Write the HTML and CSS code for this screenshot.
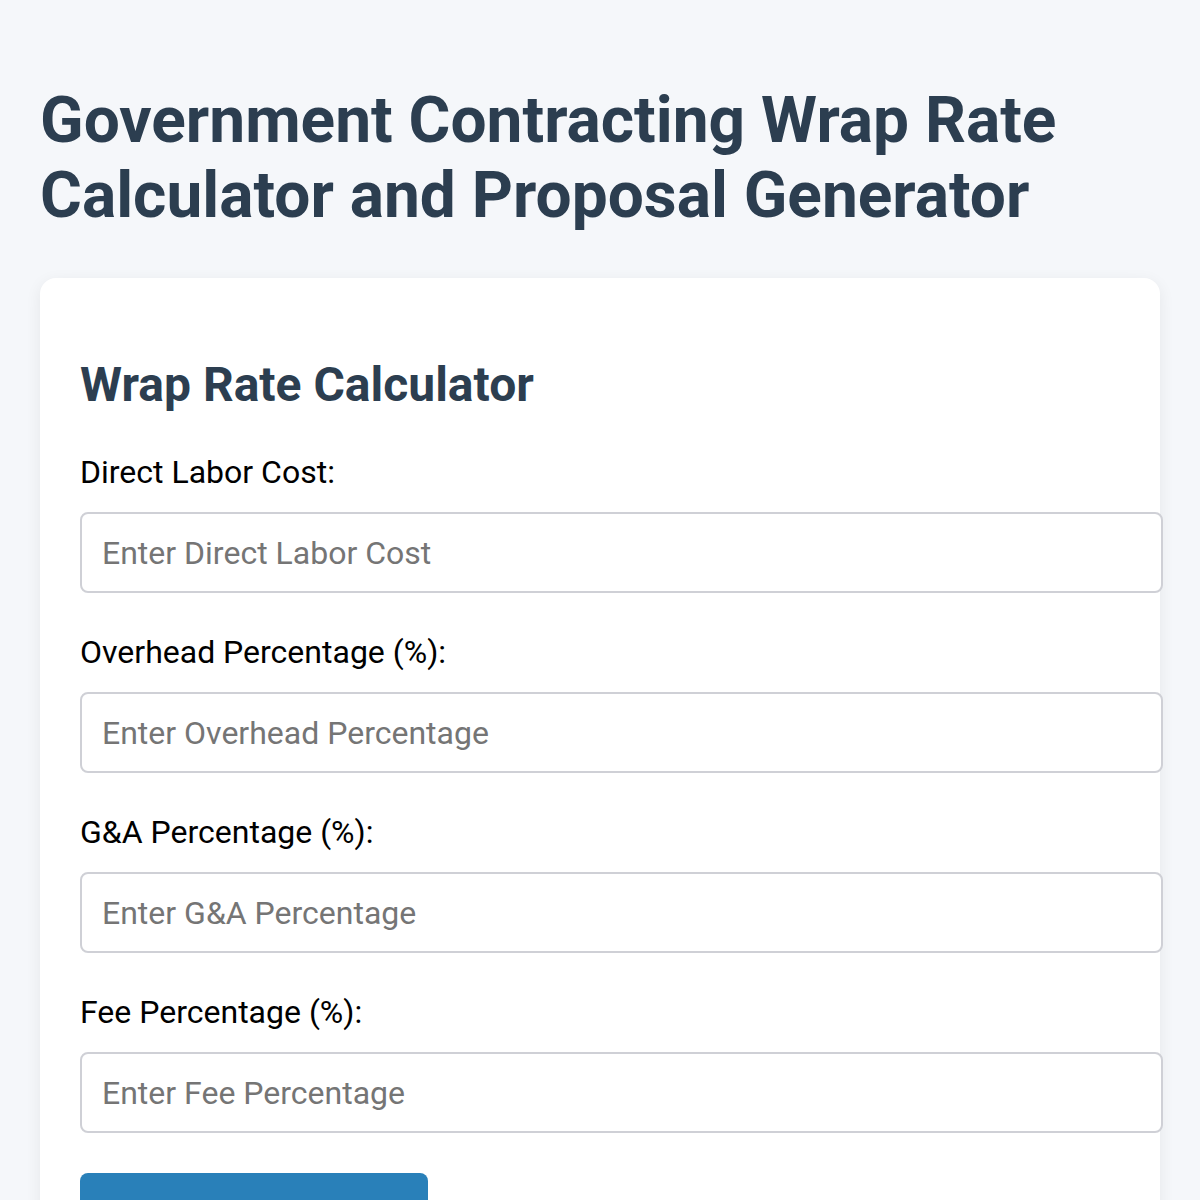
FILE: index.html
```html
<!DOCTYPE html>
<html lang="en">
<head>
<meta charset="utf-8">
<title>Government Contracting Wrap Rate Calculator and Proposal Generator</title>
<link rel="stylesheet" href="styles.css">
</head>
<body>
<h1 class="page-title">Government Contracting Wrap Rate Calculator and Proposal Generator</h1>
<section class="card">
  <h2 class="card-title">Wrap Rate Calculator</h2>
  <label class="field-label" for="labor">Direct Labor Cost:</label>
  <input class="field-input" id="labor" type="number" placeholder="Enter Direct Labor Cost">
  <label class="field-label" for="overhead">Overhead Percentage (%):</label>
  <input class="field-input" id="overhead" type="number" placeholder="Enter Overhead Percentage">
  <label class="field-label" for="ga">G&amp;A Percentage (%):</label>
  <input class="field-input" id="ga" type="number" placeholder="Enter G&amp;A Percentage">
  <label class="field-label" for="fee">Fee Percentage (%):</label>
  <input class="field-input" id="fee" type="number" placeholder="Enter Fee Percentage">
  <button class="primary-btn" type="button">Calculate Wrap Rate</button>
</section>
</body>
</html>
```
FILE: styles.css
```css
html, body {
  margin: 0;
  background: #f5f7fa;
}
body {
  padding: 40px;
  font-family: Roboto, "Noto Sans", sans-serif;
  color: #000;
}
.page-title {
  font-size: 64px;
  font-weight: 700;
  line-height: normal;
  color: #2c3e50;
  margin: 43px 0 45px 0;
}
.card {
  background: #fff;
  border-radius: 16px;
  box-shadow: 0 4px 16px rgba(0, 0, 0, 0.07);
  padding: 38px 40px 40px 40px;
}
.card-title {
  font-size: 48px;
  font-weight: 700;
  line-height: normal;
  color: #2c3e50;
  margin: 40px 0 40px 0;
}
.field-label {
  display: block;
  font-size: 32px;
  line-height: normal;
  margin-bottom: 21px;
}
.field-input {
  display: block;
  box-sizing: border-box;
  width: calc(100% + 43px);
  height: 81px;
  padding: 0 20px;
  margin: 0 0 40px 0;
  border: 2px solid #cfd0d6;
  border-radius: 8px;
  font-family: Roboto, "Noto Sans", sans-serif;
  font-size: 32px;
  background: #fff;
  outline: none;
}
.field-input::placeholder {
  color: #757575;
}
.primary-btn {
  display: block;
  width: 348px;
  padding: 20px 40px;
  border: none;
  border-radius: 8px;
  background: #2980b9;
  color: #fff;
  font-family: Roboto, "Noto Sans", sans-serif;
  font-size: 32px;
  cursor: pointer;
}
```
